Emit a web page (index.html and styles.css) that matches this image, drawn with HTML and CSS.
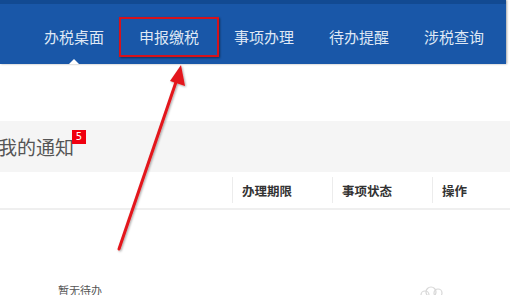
FILE: index.html
```html
<!DOCTYPE html>
<html lang="zh">
<head>
<meta charset="utf-8">
<link rel="stylesheet" href="styles.css">
</head>
<body>
<div class="page">
  <nav class="header">
    <a class="nav-item active">办税桌面</a>
    <a class="nav-item boxed">申报缴税</a>
    <a class="nav-item">事项办理</a>
    <a class="nav-item">待办提醒</a>
    <a class="nav-item">涉税查询</a>
  </nav>
  <section class="notice">
    <h2 class="notice-title">我的通知<span class="badge">5</span></h2>
  </section>
  <div class="table-head">
    <div class="cell first"></div>
    <div class="cell"><span>办理期限</span></div>
    <div class="cell"><span>事项状态</span></div>
    <div class="cell last"><span>操作</span></div>
  </div>
  <div class="table-body">
    <div class="empty">暂无待办</div>
    <svg class="empty-icon" width="30" height="14" viewBox="0 0 30 14">
      <circle cx="9" cy="12" r="4" fill="none" stroke="#d8d8d8" stroke-width="1.2"/>
      <circle cx="15" cy="9" r="5" fill="none" stroke="#d8d8d8" stroke-width="1.2"/>
      <circle cx="22" cy="10" r="4" fill="none" stroke="#d8d8d8" stroke-width="1.2"/>
    </svg>
  </div>
  <svg class="arrow" width="510" height="295" viewBox="0 0 510 295">
    <defs>
      <filter id="sh" x="-20%" y="-20%" width="140%" height="140%">
        <feDropShadow dx="1" dy="1" stdDeviation="0.8" flood-color="#000" flood-opacity="0.35"/>
      </filter>
    </defs>
    <g filter="url(#sh)">
      <line x1="119" y1="249" x2="176" y2="82" stroke="#e3151b" stroke-width="3" stroke-linecap="round"/>
      <polygon points="181,65 185,86 170,81" fill="#e3151b"/>
    </g>
  </svg>
</div>
</body>
</html>
```
FILE: styles.css
```css
* { box-sizing: border-box; }
html, body { margin: 0; padding: 0; background: #fff; }
body {
  width: 510px;
  height: 295px;
  overflow: hidden;
  font-family: "Noto Sans CJK SC", "Noto Sans", sans-serif;
}
.page { position: relative; width: 510px; height: 295px; }

.header {
  height: 64px;
  margin-right: 4px;
  background: #1957a8;
  border-top: 4px solid #124a92;
  padding: 4px 0 0 44px;
  display: flex;
  gap: 35px;
  box-shadow: 1px 0 2px rgba(0,0,0,0.35);
}
.nav-item {
  position: relative;
  display: flex;
  align-items: center;
  font-size: 15px;
  color: #dfe8f5;
  white-space: nowrap;
}
.nav-item.active::after {
  content: "";
  position: absolute;
  left: 50%;
  bottom: 0;
  margin-left: -5px;
  border-left: 5px solid transparent;
  border-right: 5px solid transparent;
  border-bottom: 5px solid #fff;
}
.nav-item.boxed::before {
  content: "";
  position: absolute;
  left: -20px;
  right: -20px;
  top: 9px;
  height: 36px;
  border: 2px solid #d5121c;
  box-shadow: 1px 1px 2px rgba(0,0,0,0.45);
}

.notice {
  margin-top: 57px;
  height: 51px;
  background: #f5f5f5;
  display: flex;
  align-items: center;
}
.notice-title {
  margin: 0 0 0 -2px;
  font-size: 19px;
  font-weight: normal;
  color: #555;
  display: flex;
  align-items: center;
}
.badge {
  position: relative;
  top: -10px;
  width: 14px;
  height: 14px;
  margin-left: -2px;
  background: #f0000f;
  color: #fff;
  font-size: 10px;
  line-height: 14px;
  text-align: center;
  font-family: "DejaVu Sans", sans-serif;
}

.table-head {
  height: 38px;
  display: grid;
  grid-template-columns: 232px 100px 100px 78px;
  align-items: center;
  border-bottom: 2px solid #efefef;
}
.cell {
  height: 26px;
  border-left: 1px solid #ececec;
  padding-left: 9px;
  display: flex;
  align-items: center;
  font-size: 12.5px;
  font-weight: bold;
  color: #333;
}
.cell.first { border-left: none; }

.table-body {
  position: relative;
  height: 85px;
}
.empty {
  position: absolute;
  left: 58px;
  top: 72px;
  font-size: 11px;
  color: #555;
}
.empty-icon {
  position: absolute;
  left: 416px;
  top: 73px;
}

.arrow {
  position: absolute;
  left: 0;
  top: 0;
  pointer-events: none;
}
```
